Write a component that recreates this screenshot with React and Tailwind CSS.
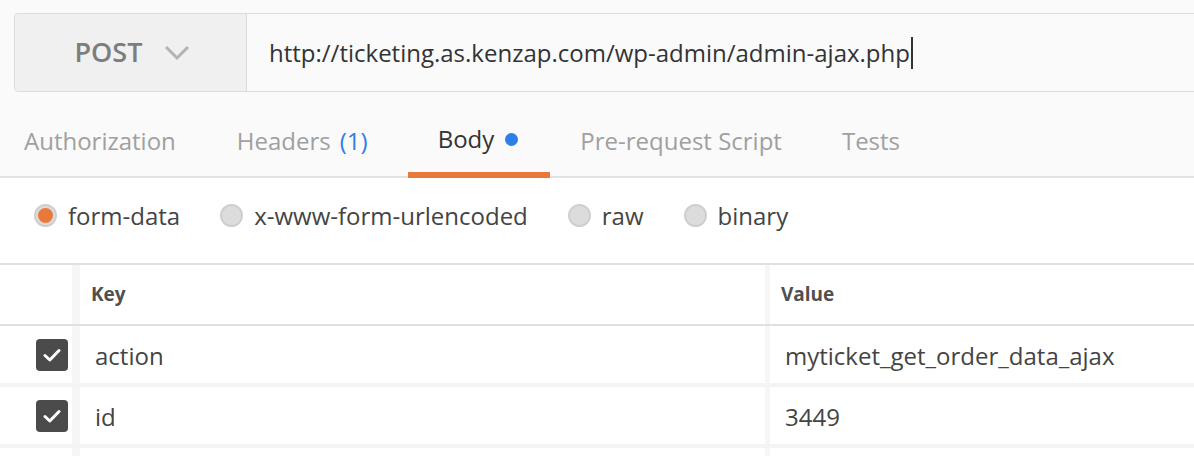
import React from "react";

const font = { fontFamily: '"Open Sans", "Noto Sans", sans-serif' };

function Radio({ checked, label }) {
  return (
    <div className="flex items-center gap-[11px]">
      <span className="w-[23px] h-[23px] rounded-full border-2 border-[#cfcfcf] bg-[#dcdcdc] flex items-center justify-center">
        {checked && <span className="w-[15px] h-[15px] rounded-full bg-[#e8793a]" />}
      </span>
      <span className="text-[24px] text-[#444]">{label}</span>
    </div>
  );
}

function Check() {
  return (
    <span className="w-[32px] h-[32px] rounded-[4px] bg-[#4b4b4b] flex items-center justify-center">
      <svg width="18" height="14" viewBox="0 0 18 14" fill="none">
        <path d="M2 7.5 L6.8 12 L16 2.5" stroke="#fff" strokeWidth="3" strokeLinecap="round" strokeLinejoin="round" />
      </svg>
    </span>
  );
}

const rows = [
  { key: "action", value: "myticket_get_order_data_ajax" },
  { key: "id", value: "3449" },
];

export default function App() {
  return (
    <div className="w-[1194px] h-[456px] overflow-hidden bg-white" style={font}>
      {/* Request bar + tabs */}
      <div className="bg-[#fafafa] pt-[13px] pl-[14px]">
        <div className="flex h-[79px] -mr-[6px] border border-[#dcdcdc] rounded-[4px] overflow-hidden">
          <div className="w-[232px] bg-[#f0f0f0] border-r border-[#dcdcdc] flex items-center justify-center gap-[22px] pl-[4px]">
            <span className="text-[27px] font-semibold text-[#7d7d7d]">POST</span>
            <svg width="26" height="16" viewBox="0 0 26 16" fill="none">
              <path d="M2 2 L13 13 L24 2" stroke="#b3b3b3" strokeWidth="3" />
            </svg>
          </div>
          <div className="flex-1 bg-[#fafafa] flex items-center pl-[22px]">
            <span className="text-[24px] text-[#333] border-r-2 border-[#333] pr-[1px] leading-[32px]">
              http://ticketing.as.kenzap.com/wp-admin/admin-ajax.php
            </span>
          </div>
        </div>
      </div>
      <div className="bg-[#fafafa] h-[86px] flex items-stretch border-b-2 border-[#e2e2e2] text-[24px]">
        <div className="pl-[24px] pr-[30px] flex items-center pt-[14px] text-[#a0a0a0]">Authorization</div>
        <div className="px-[31px] flex items-center pt-[14px] text-[#a0a0a0]">
          Headers <span className="ml-[9px] text-[#2f7fe6]">(1)</span>
        </div>
        <div className="ml-[9px] pl-[30px] pr-[32px] flex items-center pt-[14px] text-[#333] border-b-[6px] border-[#e8793a] -mb-[2px]">
          Body <span className="ml-[11px] w-[13px] h-[13px] rounded-full bg-[#2f7fe6]" />
        </div>
        <div className="px-[30px] flex items-center pt-[14px] text-[#a0a0a0]">Pre-request Script</div>
        <div className="px-[30px] flex items-center pt-[14px] text-[#a0a0a0]">Tests</div>
      </div>

      {/* Body type radios */}
      <div className="h-[85px] flex items-center gap-[40px] pl-[34px] pb-[10px]">
        <Radio checked label="form-data" />
        <Radio label="x-www-form-urlencoded" />
        <Radio label="raw" />
        <Radio label="binary" />
      </div>

      {/* Key / Value table */}
      <div className="border-t-2 border-[#e0e0e0]">
        <div className="flex h-[61px] border-b-2 border-[#e0e0e0]">
          <div className="w-[72px]" />
          <div className="w-[8px] bg-[#f6f6f6]" />
          <div className="w-[685px] flex items-center pl-[11px] text-[19px] font-bold text-[#505050]">Key</div>
          <div className="w-[5px] bg-[#f6f6f6]" />
          <div className="flex-1 flex items-center pl-[11px] text-[19px] font-bold text-[#505050]">Value</div>
        </div>
        {rows.map((r) => (
          <div key={r.key} className="flex h-[61px] border-b-4 border-[#f4f4f4]">
            <div className="w-[72px] flex items-center justify-end pr-[4px]">
              <Check />
            </div>
            <div className="w-[8px] bg-[#f6f6f6]" />
            <div className="w-[685px] flex items-center pl-[15px] pt-[3px] text-[24px] text-[#444]">{r.key}</div>
            <div className="w-[5px] bg-[#f6f6f6]" />
            <div className="flex-1 flex items-center pl-[15px] pt-[3px] text-[24px] text-[#444]">{r.value}</div>
          </div>
        ))}
        <div className="flex h-[40px]">
          <div className="w-[72px]" />
          <div className="w-[8px] bg-[#f6f6f6]" />
          <div className="w-[685px]" />
          <div className="w-[5px] bg-[#f6f6f6]" />
          <div className="flex-1" />
        </div>
      </div>
    </div>
  );
}
